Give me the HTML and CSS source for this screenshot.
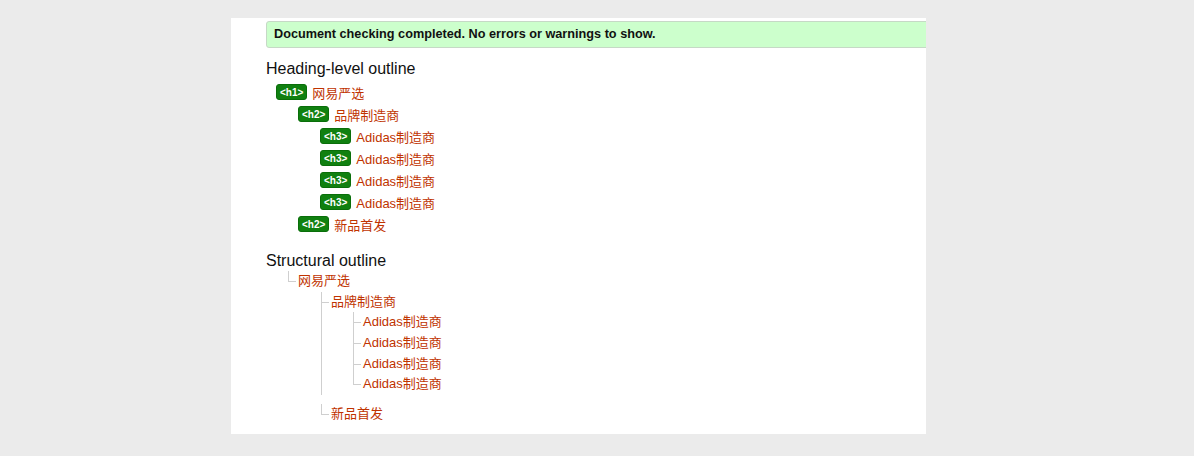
FILE: index.html
```html
<!DOCTYPE html>
<html lang="zh">
<head>
<meta charset="utf-8">
<title>Outline</title>
<link rel="stylesheet" href="styles.css">
</head>
<body>
<div class="panel">
  <p class="success">Document checking completed. No errors or warnings to show.</p>

  <h2 class="section-title">Heading-level outline</h2>
  <ol class="headings">
    <li class="lvl1"><span class="tag">&lt;h1&gt;</span><span class="txt">网易严选</span></li>
    <li class="lvl2"><span class="tag">&lt;h2&gt;</span><span class="txt">品牌制造商</span></li>
    <li class="lvl3"><span class="tag">&lt;h3&gt;</span><span class="txt">Adidas制造商</span></li>
    <li class="lvl3"><span class="tag">&lt;h3&gt;</span><span class="txt">Adidas制造商</span></li>
    <li class="lvl3"><span class="tag">&lt;h3&gt;</span><span class="txt">Adidas制造商</span></li>
    <li class="lvl3"><span class="tag">&lt;h3&gt;</span><span class="txt">Adidas制造商</span></li>
    <li class="lvl2"><span class="tag">&lt;h2&gt;</span><span class="txt">新品首发</span></li>
  </ol>

  <h2 class="section-title struct">Structural outline</h2>
  <ul class="tree t1">
    <li><span class="txt">网易严选</span>
      <ul class="tree t2">
        <li><span class="txt">品牌制造商</span>
          <ul class="tree t3">
            <li><span class="txt">Adidas制造商</span></li>
            <li><span class="txt">Adidas制造商</span></li>
            <li><span class="txt">Adidas制造商</span></li>
            <li><span class="txt">Adidas制造商</span></li>
          </ul>
        </li>
        <li><span class="txt">新品首发</span></li>
      </ul>
    </li>
  </ul>
</div>
</body>
</html>
```
FILE: styles.css
```css
html, body {
  margin: 0;
  padding: 0;
  background: #ebebeb;
}
body {
  font-family: "Liberation Sans", "Noto Sans CJK SC", Arial, sans-serif;
  color: #000;
}
.panel {
  margin: 18px 0 0 231px;
  width: 695px;
  height: 416px;
  background: #fff;
  padding-left: 35px;
  box-sizing: border-box;
  overflow: hidden;
}
.success {
  margin: 3px -20px 0 0;
  height: 27px;
  box-sizing: border-box;
  background: #ccffcc;
  border: 1px solid #c6d9c6;
  border-radius: 3px;
  padding: 0 7px;
  font-size: 12.7px;
  font-weight: bold;
  line-height: 25px;
  color: #111;
}
.section-title {
  margin: 11px 0 0 0;
  font-size: 16px;
  font-weight: normal;
  line-height: 20px;
  height: 20px;
  color: #111;
}
.section-title.struct {
  margin-top: 16px;
}
.headings {
  list-style: none;
  margin: 2px 0 0 0;
  padding: 0;
}
.headings li {
  display: flex;
  align-items: center;
  height: 22px;
}
.headings .lvl1 { padding-left: 10px; }
.headings .lvl2 { padding-left: 32px; }
.headings .lvl3 { padding-left: 54px; }
.tag {
  display: inline-block;
  height: 16px;
  line-height: 16px;
  padding: 0 3px;
  background: #108010;
  border: 1px solid #0a6e0a;
  box-sizing: border-box;
  border-radius: 3px;
  color: #fff;
  font-size: 10px;
  font-weight: bold;
  margin-right: 5px;
}
.txt {
  color: #c03300;
  font-size: 13px;
}
.tree {
  list-style: none;
  margin: 0;
  padding: 0;
}
.t1 { margin-left: 22px; }
.t2 { padding-left: 23px; }
.t3 { padding-left: 22px; margin-bottom: 9px; }
.tree li {
  position: relative;
  padding-left: 10px;
}
.tree .txt {
  display: block;
  height: 20.7px;
  line-height: 20.7px;
  white-space: nowrap;
}
.tree li::before {
  content: "";
  position: absolute;
  left: 0;
  top: 0;
  width: 7px;
  height: 10px;
  border-left: 1px solid #cfcfcf;
  border-bottom: 1px solid #cfcfcf;
}
.tree li:not(:last-child)::after {
  content: "";
  position: absolute;
  left: 0;
  top: 0;
  bottom: 0;
  border-left: 1px solid #cfcfcf;
}
```
